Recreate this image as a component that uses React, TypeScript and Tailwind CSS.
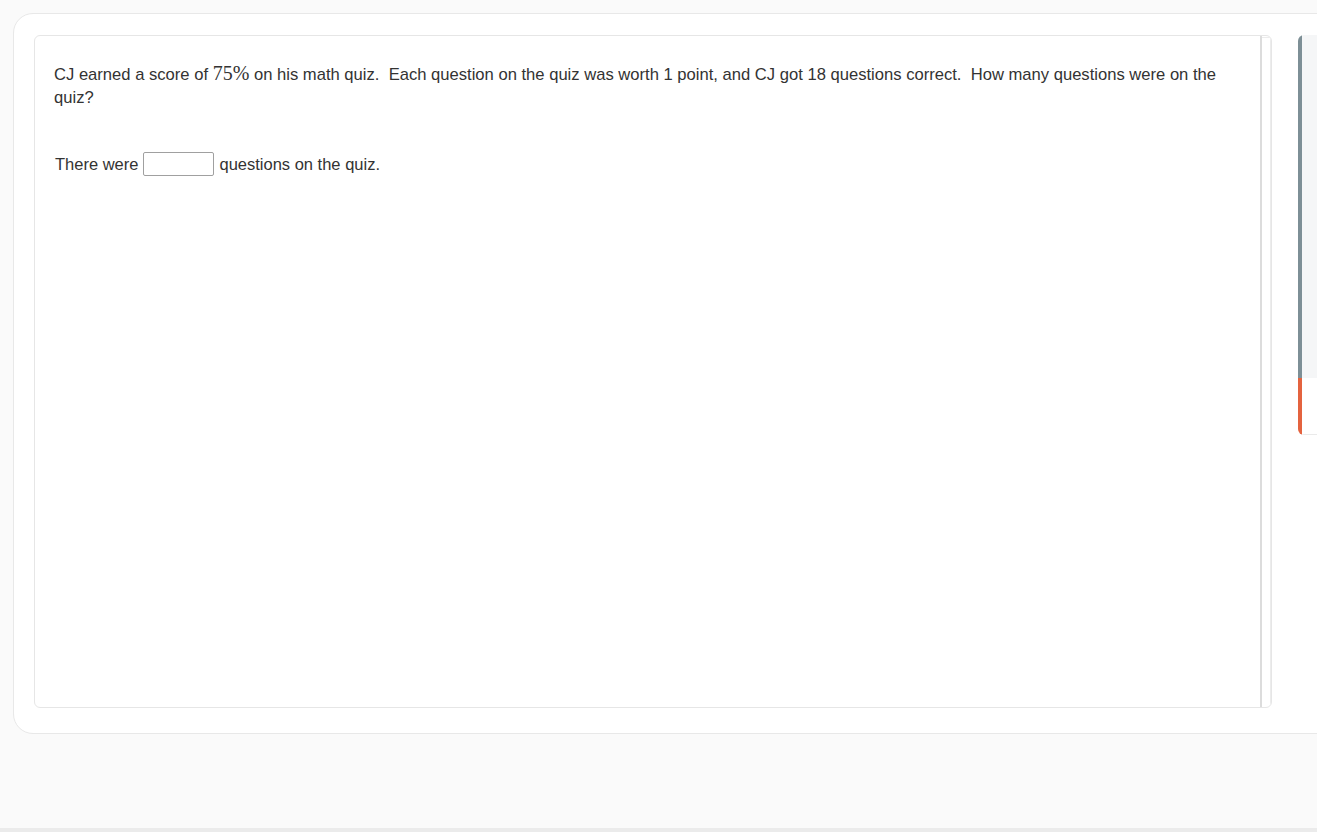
export default function App() {
  return (
    <div
      className="w-full h-[832px] overflow-hidden bg-[#fafafa] flex flex-col text-[#333]"
      style={{ fontFamily: '"Liberation Sans", Arial, sans-serif' }}
    >
      <div className="flex-1 pt-[13px] pl-[13px]">
        {/* Outer card */}
        <div className="w-[1360px] h-[721px] bg-white border border-[#e8e8e8] rounded-[20px] pt-[21px] pl-[20px] flex items-start">
          {/* Question frame */}
          <div className="w-[1238px] h-[673px] border border-[#e6e6e6] rounded-[6px] flex overflow-hidden shrink-0">
            <div className="flex-1 border-r-2 border-[#dcdcdc] pt-[27px] pl-[19px] pr-[24px]">
              <p className="text-[16.6px] leading-[23px]">
                CJ earned a score of{" "}
                <span
                  className="text-[20px] leading-[20px]"
                  style={{ fontFamily: '"Liberation Serif", "Times New Roman", serif' }}
                >
                  75%
                </span>{" "}
                on his math quiz.&nbsp; Each question on the quiz was worth 1 point, and CJ got 18 questions correct.&nbsp; How many questions were on the quiz?
              </p>
              <div className="mt-[43px] pl-px flex items-center gap-[5px] text-[16.5px]">
                <span>There were</span>
                <input
                  type="text"
                  className="w-[71px] h-[24px] border border-[#a0a0a0] rounded-[2px] bg-white outline-none px-1"
                />
                <span>questions on the quiz.</span>
              </div>
            </div>
            <div className="w-[9px] border-t border-r border-[#ececec] mt-px" />
          </div>

          {/* Side panel */}
          <div className="ml-[26px] w-[60px] h-[400px] flex rounded-l-[6px] overflow-hidden shrink-0">
            <div className="w-[4px] flex flex-col">
              <div className="h-[343px] bg-[#7d8f96]" />
              <div className="flex-1 bg-[#e4633f]" />
            </div>
            <div className="flex-1 flex flex-col">
              <div className="h-[343px] bg-[#f5f6f7]" />
              <div className="flex-1 bg-white border-b border-[#eaeaea]" />
            </div>
          </div>
        </div>
      </div>
      <div className="h-[4px] bg-[#ebebeb]" />
    </div>
  );
}
